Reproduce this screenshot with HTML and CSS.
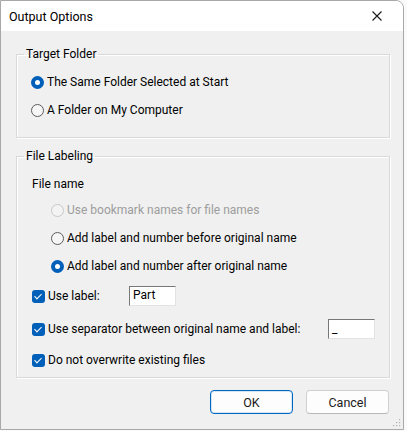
FILE: index.html
```html
<!DOCTYPE html>
<html lang="en">
<head>
  <meta charset="UTF-8" />
  <title>Output Options</title>
  <link rel="stylesheet" href="styles.css">
</head>
<body>
  <div class="window">
    <div class="titlebar">
      <span class="title">Output Options</span>
      <svg class="close" width="10" height="10" viewBox="0 0 10 10">
        <path d="M0.5 0.5 L9.5 9.5 M9.5 0.5 L0.5 9.5" stroke="#1a1a1a" stroke-width="1.1" fill="none"/>
      </svg>
    </div>

    <div class="content">
      <fieldset class="group group-target">
        <legend>Target Folder</legend>
        <div class="row"><span class="radio checked"></span>The Same Folder Selected at Start</div>
        <div class="row"><span class="radio"></span>A Folder on My Computer</div>
      </fieldset>

      <fieldset class="group group-label">
        <legend>File Labeling</legend>
        <div class="row caption">File name</div>
        <div class="row indent disabled"><span class="radio"></span>Use bookmark names for file names</div>
        <div class="row indent"><span class="radio"></span>Add label and number before original name</div>
        <div class="row indent"><span class="radio checked"></span>Add label and number after original name</div>
        <div class="row tall">
          <span class="check"></span><span class="check-text label-text">Use label:</span>
          <span class="textbox short">Part</span>
        </div>
        <div class="row taller">
          <span class="check"></span><span class="check-text sep-text">Use separator between original name and label:</span>
          <span class="textbox short sep">_</span>
        </div>
        <div class="row"><span class="check"></span><span class="check-text">Do not overwrite existing files</span></div>
      </fieldset>

      <div class="buttons">
        <button class="btn default">OK</button>
        <button class="btn">Cancel</button>
      </div>
    </div>

    <svg class="grip" width="8" height="8" viewBox="0 0 8 8">
      <rect x="6" y="0" width="1.2" height="1.2" fill="#b0b0b0"/>
      <rect x="3" y="3" width="1.2" height="1.2" fill="#b0b0b0"/>
      <rect x="6" y="3" width="1.2" height="1.2" fill="#b0b0b0"/>
      <rect x="0" y="6" width="1.2" height="1.2" fill="#b0b0b0"/>
      <rect x="3" y="6" width="1.2" height="1.2" fill="#b0b0b0"/>
      <rect x="6" y="6" width="1.2" height="1.2" fill="#b0b0b0"/>
    </svg>
  </div>
</body>
</html>
```

FILE: styles.css
```css
html, body {
  margin: 0;
  padding: 0;
  background: #fafafa;
  font-family: Roboto, "Noto Sans", sans-serif;
  font-size: 12px;
  color: #000;
}
.window {
  position: relative;
  width: 402px;
  height: 428px;
  border: 1px solid #a8a8a8;
  border-radius: 0 8px 0 0;
  background: #f0f0f0;
  overflow: hidden;
}
.titlebar {
  height: 30px;
  background: #fff;
  display: flex;
  align-items: center;
  justify-content: space-between;
  padding: 0 21px 0 8px;
}
.title {
  font-size: 12.5px;
  margin-top: 1px;
}
.content {
  padding: 15px 13px 0 15px;
}
.group {
  margin: 0;
  padding: 6px 0 13px 0;
  border: 1px solid #d9d9d9;
  box-shadow: inset 1px 1px 0 #fff, 1px 1px 0 #fff;
  border-radius: 0;
}
.group legend {
  margin-left: 7px;
  padding: 0 2px;
  height: 16px;
  line-height: 16px;
}
.group-label {
  margin-top: 10px;
  padding-top: 8px;
  padding-bottom: 3px;
}
.row {
  height: 28px;
  display: flex;
  align-items: center;
  padding-left: 14px;
}
.caption {
  height: 24px;
  padding-left: 15px;
}
.indent {
  padding-left: 34px;
}
.tall {
  height: 32px;
  padding-left: 15px;
}
.taller {
  height: 34px;
  padding-left: 15px;
}
.group-label .row:last-child {
  padding-left: 15px;
}
.disabled {
  color: #9d9d9d;
}
.radio {
  width: 11px;
  height: 11px;
  border: 1px solid #5c5c5c;
  border-radius: 50%;
  background: #f6f6f6;
  margin-right: 3px;
  flex: none;
  box-sizing: content-box;
}
.disabled .radio {
  border-color: #c8c8c8;
  background: #f3f3f3;
}
.radio.checked {
  width: 5px;
  height: 5px;
  border: 4px solid #005fb8;
  background: #fff;
}
.check {
  width: 13px;
  height: 13px;
  border-radius: 3px;
  background: #005fb8;
  flex: none;
  margin-right: 3px;
  position: relative;
}
.check::after {
  content: "";
  position: absolute;
  left: 4px;
  top: 2px;
  width: 3px;
  height: 6px;
  border: solid #fff;
  border-width: 0 1.3px 1.3px 0;
  transform: rotate(45deg);
}
.label-text {
  width: 81px;
}
.sep-text {
  width: 280px;
}
.textbox {
  height: 20px;
  box-sizing: border-box;
  background: #fff;
  border: 1px solid #e3e3e3;
  border-top-color: #777;
  border-left-color: #777;
  line-height: 17px;
  padding-left: 3px;
}
.short {
  width: 47px;
}
.sep {
  line-height: 18px;
}
.buttons {
  display: flex;
  justify-content: flex-end;
  gap: 13px;
  margin-top: 12px;
  padding-right: 1px;
}
.btn {
  width: 83px;
  height: 24px;
  font-family: inherit;
  font-size: 12.5px;
  background: #fdfdfd;
  border: 1px solid #d0d0d0;
  border-bottom-color: #b8b8b8;
  border-radius: 4px;
  color: #1a1a1a;
  padding: 0;
}
.btn.default {
  border: 1px solid #0067c0;
  box-shadow: inset 0 0 0 1px #d6e6f5;
}
.grip {
  position: absolute;
  right: 2px;
  bottom: 2px;
}
```
